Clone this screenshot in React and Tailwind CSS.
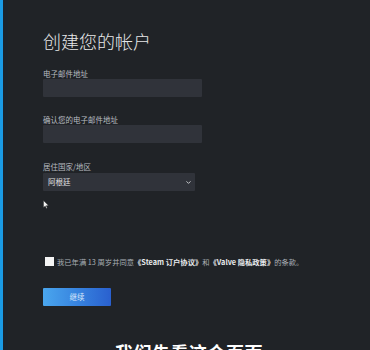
import { ChevronDown } from "lucide-react";

const font = { fontFamily: '"Noto Sans CJK SC", "Noto Sans", sans-serif' };

function Field({ label, className = "", children }) {
  return (
    <div className={className}>
      <div className="text-[7.5px] leading-[8px] text-[#b8bcc1]">{label}</div>
      {children}
    </div>
  );
}

export default function App() {
  return (
    <div
      style={font}
      className="relative flex h-[350px] w-[370px] overflow-hidden bg-[#202327]"
    >
      <div className="w-[3px] shrink-0 bg-[#1a9be6]" />
      <div className="w-[5px] shrink-0 bg-[#1c232b]" />

      <div className="flex-1 pl-[35px] pt-[32px]">
        <h1 className="text-[18px] leading-[18px] font-light text-[#e6e7e8]">创建您的帐户</h1>

        <Field label="电子邮件地址" className="mt-[20px]">
          <div className="mt-[1px] h-[18px] w-[159px] rounded-[1px] bg-[#30333a]" />
        </Field>

        <Field label="确认您的电子邮件地址" className="mt-[19px]">
          <div className="mt-[1px] h-[18px] w-[159px] rounded-[1px] bg-[#30333a]" />
        </Field>

        <Field label="居住国家/地区" className="mt-[20px]">
          <div className="mt-[2px] flex h-[18px] w-[152px] items-center justify-between rounded-[1px] bg-[#30333a] pl-[5px] pr-[3px]">
            <span className="text-[7.5px] leading-[8px] text-[#e0e2e4]">阿根廷</span>
            <ChevronDown size={7} strokeWidth={3} className="text-[#d6d8da]" />
          </div>
        </Field>

        <div className="mt-[66px] flex items-center gap-[3px] pl-[2px]">
          <div className="h-[9px] w-[9px] shrink-0 bg-[#f4f4f4]" />
          <p className="text-[7.3px] leading-[8px] whitespace-nowrap text-[#a9afb5]">
            我已年满 13 周岁并同意
            <span className="font-bold text-[#e9ebed]">《Steam 订户协议》</span>和
            <span className="font-bold text-[#e9ebed]">《Valve 隐私政策》</span>的条款。
          </p>
        </div>

        <button
          type="button"
          className="mt-[22px] flex h-[18px] w-[68px] items-center justify-center rounded-[1px] bg-gradient-to-r from-[#4aa6ee] to-[#2a60cf] text-[7.5px] leading-[8px] text-[#dbe9fb]"
        >
          继续
        </button>

        <div className="mt-[35px] pl-[72px] text-[18px] leading-[22px] font-bold tracking-[0.5px] whitespace-nowrap text-white">
          我们先看这个页面
        </div>
      </div>

      <svg
        className="absolute left-[43px] top-[200px]"
        width="6"
        height="9"
        viewBox="0 0 6 9"
      >
        <path d="M0.5 0.5 L0.5 7.5 L2.2 6 L3.4 8.5 L4.3 8.1 L3.2 5.7 L5.5 5.6 Z" fill="#f2f2f2" stroke="#222" strokeWidth="0.4" />
      </svg>
    </div>
  );
}
